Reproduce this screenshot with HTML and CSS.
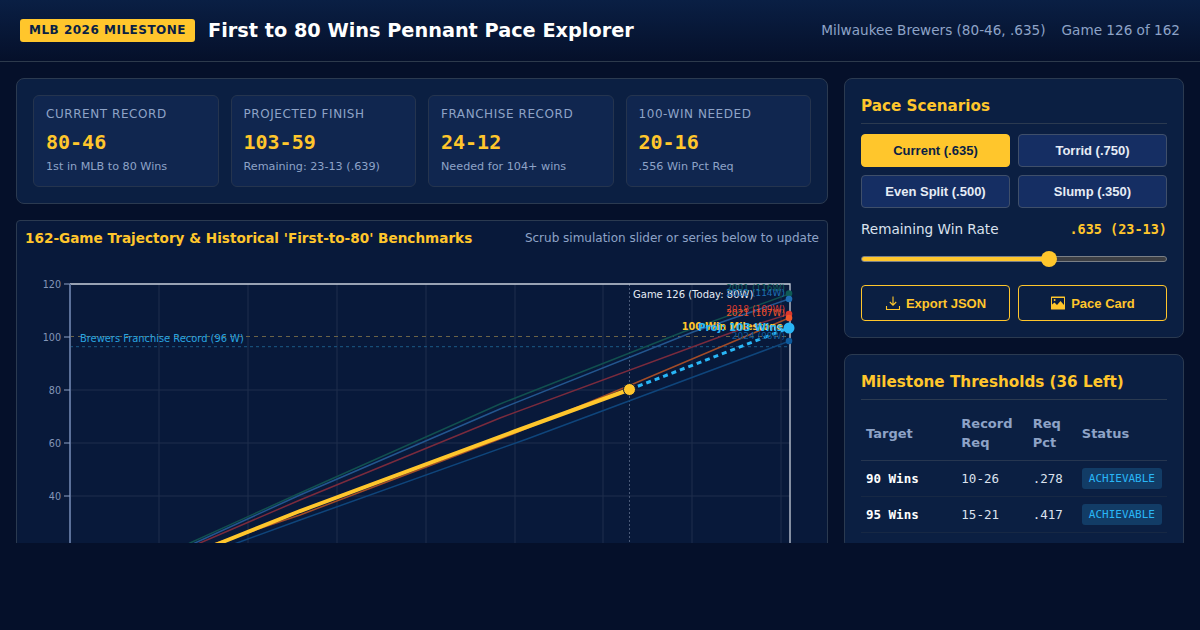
FILE: index.html
```html
<!DOCTYPE html>
<html lang="en">
<head>
    <meta charset="UTF-8">
    <title>First to 80 Wins Pennant Pace Explorer</title>
    <link rel="stylesheet" href="styles.css">
</head>
<body>

    <header class="top-bar">
        <div class="brand">
            <span class="badge">MLB 2026 MILESTONE</span>
            <h1>First to 80 Wins Pennant Pace Explorer</h1>
        </div>
        <div class="team-info">
            <span>Milwaukee Brewers (80-46, .635)</span>
            <span>Game 126 of 162</span>
        </div>
    </header>

    <main class="dashboard">
        <div class="left-col">
            <section class="panel stats-panel">
                <div class="stat-card">
                    <div class="stat-label">Current Record</div>
                    <div class="stat-value">80-46</div>
                    <div class="stat-sub">1st in MLB to 80 Wins</div>
                </div>
                <div class="stat-card">
                    <div class="stat-label">Projected Finish</div>
                    <div class="stat-value">103-59</div>
                    <div class="stat-sub">Remaining: 23-13 (.639)</div>
                </div>
                <div class="stat-card">
                    <div class="stat-label">Franchise Record</div>
                    <div class="stat-value">24-12</div>
                    <div class="stat-sub">Needed for 104+ wins</div>
                </div>
                <div class="stat-card">
                    <div class="stat-label">100-Win Needed</div>
                    <div class="stat-value">20-16</div>
                    <div class="stat-sub">.556 Win Pct Req</div>
                </div>
            </section>

            <section class="panel chart-panel">
                <div class="chart-head">
                    <h2>162-Game Trajectory &amp; Historical 'First-to-80' Benchmarks</h2>
                    <span class="chart-hint">Scrub simulation slider or series below to update</span>
                </div>
                <svg class="chart" viewBox="25 250 794 360" width="794" height="360">
                    <!-- grid -->
                    <g class="grid">
                        <path d="M159 284V610M248 284V610M337 284V610M426 284V610M515 284V610M603 284V610M692 284V610M781 284V610"/>
                        <path d="M70 390H790M70 443H790M70 496H790M70 549H790"/>
                    </g>
                    <path class="ref-hundred" d="M70 336.5H790"/>
                    <path class="ref-franchise" d="M70 346.7H790"/>
                    <path class="today-line" d="M629.5 284V610"/>

                    <!-- axes -->
                    <path class="axis-top" d="M70 284H790V610"/>
                    <path class="axis-left" d="M70 284V610"/>
                    <path class="tick" d="M64 284H70M64 337H70M64 390H70M64 443H70M64 496H70"/>
                    <g class="tick-label">
                        <text x="61" y="287.5">120</text>
                        <text x="61" y="340.5">100</text>
                        <text x="61" y="393.5">80</text>
                        <text x="61" y="446.5">60</text>
                        <text x="61" y="499.5">40</text>
                    </g>

                    <!-- past seasons -->
                    <polyline class="season s-2001" points="70,602 190,543 300,493 500,404 683,332 789,294"/>
                    <polyline class="season s-2022" points="70,602 195,543 300,495 500,409 693,332 789,299"/>
                    <polyline class="season s-2018" points="70,602 200,543 300,500 500,418 733,332 789,314"/>
                    <polyline class="season s-2021" points="70,602 217,543 300,515 513,434 633,384 789,318"/>
                    <polyline class="season s-2024" points="70,602 237,543 300,520 527,439 787,342"/>
                    <circle class="dot-2001" cx="789" cy="293.5" r="3.3"/>
                    <circle class="dot-2022" cx="789" cy="299" r="3.3"/>
                    <circle class="dot-2018" cx="789" cy="314" r="3.3"/>
                    <circle class="dot-2021" cx="789" cy="318" r="3.3"/>
                    <circle class="dot-2024" cx="789" cy="341" r="3.3"/>

                    <!-- brewers -->
                    <polyline class="current-line" points="70,602 220,543 300,511 513,432 629.5,389.5"/>
                    <path class="proj-line" d="M629.5 389.5L789 328"/>
                    <circle class="dot-today" cx="629.5" cy="389.5" r="6"/>
                    <circle class="dot-proj" cx="789" cy="328" r="5.5"/>

                    <!-- labels -->
                    <text class="lbl-franchise" x="80" y="342">Brewers Franchise Record (96 W)</text>
                    <text class="lbl-today" x="633" y="298">Game 126 (Today: 80W)</text>
                    <g class="lbl-season">
                        <text class="l-2001" x="785" y="291">2001 (116W)</text>
                        <text class="l-2022" x="785" y="296">2022 (114W)</text>
                        <text class="l-2018" x="785" y="312">2018 (109W)</text>
                        <text class="l-2021" x="785" y="316">2021 (107W)</text>
                        <text class="l-2024" x="785" y="339">2024 (98W)</text>
                    </g>
                    <text class="lbl-hundred" x="783" y="330">100 Win Milestone</text>
                    <text class="lbl-proj" x="783" y="331">Proj: 103 Wins</text>
                </svg>
            </section>
        </div>

        <div class="right-col">
            <section class="panel side-panel">
                <h3>Pace Scenarios</h3>
                <div class="btn-grid">
                    <button class="pace-btn active">Current (.635)</button>
                    <button class="pace-btn">Torrid (.750)</button>
                    <button class="pace-btn">Even Split (.500)</button>
                    <button class="pace-btn">Slump (.350)</button>
                </div>
                <div class="rate-row">
                    <span class="rate-label">Remaining Win Rate</span>
                    <span class="rate-value">.635 (23-13)</span>
                </div>
                <input class="rate-slider" type="range" min="0" max="1000" value="620">
                <div class="btn-grid export-grid">
                    <button class="export-btn">
                        <svg viewBox="0 0 16 16" width="16" height="16">
                            <path class="icon-stroke" d="M8 1.5V10M4.8 7L8 10.2L11.2 7M1.5 11V14.5H14.5V11"/>
                        </svg>
                        Export JSON
                    </button>
                    <button class="export-btn">
                        <svg viewBox="0 0 16 16" width="16" height="16">
                            <path class="icon-fill" fill-rule="evenodd" d="M1.5 1.5H14.5Q15 1.5 15 2V14Q15 14.5 14.5 14.5H1.5Q1 14.5 1 14V2Q1 1.5 1.5 1.5ZM2 3V9.5L4.5 7.5L7 10L10.5 6L14 10V3Z"/>
                            <circle class="icon-fill" cx="4.6" cy="5" r="1"/>
                        </svg>
                        Pace Card
                    </button>
                </div>
            </section>

            <section class="panel side-panel">
                <h3>Milestone Thresholds (36 Left)</h3>
                <table class="milestones">
                    <thead>
                        <tr>
                            <th class="col-target">Target</th>
                            <th class="col-record">Record Req</th>
                            <th class="col-pct">Req Pct</th>
                            <th>Status</th>
                        </tr>
                    </thead>
                    <tbody>
                        <tr><td class="target">90 Wins</td><td>10-26</td><td>.278</td><td><span class="status">ACHIEVABLE</span></td></tr>
                        <tr><td class="target">95 Wins</td><td>15-21</td><td>.417</td><td><span class="status">ACHIEVABLE</span></td></tr>
                    </tbody>
                </table>
            </section>
        </div>
    </main>

</body>
</html>
```

FILE: styles.css
```css
* {
    box-sizing: border-box;
}
body {
    margin: 0;
    height: 630px;
    overflow: hidden;
    background-color: #05102a;
    color: #e6ecf5;
    font-family: "DejaVu Sans", sans-serif;
}

/* header */
.top-bar {
    display: flex;
    justify-content: space-between;
    align-items: center;
    height: 62px;
    padding: 0 20px;
    background: linear-gradient(180deg, #0a1f44 0%, #05102a 100%);
    border-bottom: 1px solid #2d3a4c;
}
.brand {
    display: flex;
    align-items: center;
    gap: 13px;
}
.badge {
    padding: 4px 9px;
    border-radius: 3px;
    background-color: #ffc62c;
    color: #0a1f44;
    font-size: 12px;
    font-weight: bold;
    letter-spacing: 0.5px;
    line-height: 15px;
}
h1 {
    margin: 0;
    color: #fff;
    font-size: 19.3px;
    font-weight: bold;
}
.team-info {
    display: flex;
    gap: 16px;
    padding-bottom: 2px;
    color: #8ea3c7;
    font-size: 13.6px;
}

/* layout */
.dashboard {
    display: grid;
    grid-template-columns: 812px 340px;
    gap: 16px;
    height: 481px;
    padding: 16px;
    overflow: hidden;
}
.left-col, .right-col {
    display: flex;
    flex-direction: column;
    gap: 16px;
}
.panel {
    background-color: #0b1f42;
    border: 1px solid #2b3a50;
    border-radius: 8px;
}

/* stat cards */
.stats-panel {
    display: grid;
    grid-template-columns: repeat(4, 1fr);
    gap: 12px;
    padding: 16px;
}
.stat-card {
    height: 92px;
    padding: 11px 12px;
    background-color: #10264f;
    border: 1px solid #25344e;
    border-radius: 6px;
}
.stat-label {
    color: #8ea3c7;
    font-size: 12px;
    letter-spacing: 0.56px;
    line-height: 15px;
    text-transform: uppercase;
}
.stat-value {
    margin-top: 7px;
    color: #ffc62c;
    font-family: "DejaVu Sans Mono", monospace;
    font-size: 20px;
    font-weight: bold;
    line-height: 26px;
}
.stat-sub {
    margin-top: 5px;
    color: #8ea3c7;
    font-size: 11.2px;
    line-height: 14px;
}

/* chart */
.chart-panel {
    flex: none;
    height: 400px;
    padding: 7px 8px;
    background-color: #08193a;
    border-radius: 4px 4px 0 0;
}
.chart-head {
    display: flex;
    justify-content: space-between;
    align-items: center;
    height: 19px;
}
.chart-head h2 {
    margin: 0;
    color: #ffc62c;
    font-size: 13.6px;
    font-weight: bold;
}
.chart-hint {
    color: #8ea3c7;
    font-size: 12px;
}
.chart {
    display: block;
    margin-top: 3px;
}
.chart text {
    font-family: "DejaVu Sans", sans-serif;
}
.grid path {
    fill: none;
    stroke: #1f2e4d;
    stroke-width: 1;
}
.ref-hundred {
    stroke: #6b6347;
    stroke-dasharray: 4 4;
}
.ref-franchise {
    stroke: #1b5a85;
    stroke-dasharray: 3 3;
}
.today-line {
    stroke: #4a5a78;
    stroke-dasharray: 2 2;
}
.axis-top {
    fill: none;
    stroke: #c8cfdb;
    stroke-width: 1.3;
}
.axis-left {
    stroke: #5b7099;
    stroke-width: 2;
}
.tick {
    stroke: #8ea3c7;
    stroke-width: 1;
}
.tick-label text {
    fill: #8496b8;
    font-size: 9.6px;
    text-anchor: end;
}
.season {
    fill: none;
    stroke-width: 1.5;
}
.s-2001 { stroke: #11504f; }
.s-2022 { stroke: #23568f; }
.s-2018 { stroke: #7a2b3d; }
.s-2021 { stroke: #a24c28; }
.s-2024 { stroke: #0f457b; }
.dot-2001 { fill: #0f5b55; }
.dot-2022 { fill: #1f6fb5; }
.dot-2018 { fill: #d9382e; }
.dot-2021 { fill: #f0562a; }
.dot-2024 { fill: #0d5a9c; }
.current-line {
    fill: none;
    stroke: #ffc62c;
    stroke-width: 4;
}
.proj-line {
    stroke: #29b6f6;
    stroke-width: 3;
    stroke-dasharray: 5 4;
}
.dot-today {
    fill: #ffc62c;
    stroke: #08193a;
    stroke-width: 1;
}
.dot-proj { fill: #29b6f6; }
.lbl-franchise {
    fill: #29a5e0;
    font-size: 9.9px;
}
.lbl-today {
    fill: #e6ecf5;
    font-size: 10px;
}
.lbl-season text {
    font-size: 9px;
    text-anchor: end;
}
.l-2001 { fill: #11605a; }
.l-2022 { fill: #1f6fb5; }
.l-2018 { fill: #d9382e; }
.l-2021 { fill: #f0562a; }
.l-2024 { fill: #0d5a9c; }
.lbl-hundred {
    fill: #ffc62c;
    font-size: 9.7px;
    font-weight: bold;
    text-anchor: end;
}
.lbl-proj {
    fill: #29b6f6;
    font-size: 10.4px;
    font-weight: bold;
    text-anchor: end;
}

/* side panels */
.side-panel {
    padding: 16px;
}
.side-panel h3 {
    margin: 0 0 10px;
    padding: 1px 0 7px;
    border-bottom: 1px solid #2b3a50;
    color: #ffc62c;
    font-size: 15.2px;
    font-weight: bold;
    line-height: 20px;
}
.btn-grid {
    display: grid;
    grid-template-columns: 1fr 1fr;
    gap: 8px;
}
.pace-btn, .export-btn {
    border-radius: 4px;
    font-family: "Liberation Sans", Arial, sans-serif;
    font-size: 13px;
    font-weight: bold;
}
.pace-btn {
    height: 33px;
    background-color: #152e63;
    border: 1px solid #3f4f6a;
    color: #e6ecf5;
}
.pace-btn.active {
    background-color: #ffc62c;
    border-color: #ffc62c;
    color: #0a1f44;
}
.rate-row {
    display: flex;
    justify-content: space-between;
    align-items: center;
    margin-top: 13px;
}
.rate-label {
    color: #dbe2ee;
    font-size: 13.6px;
}
.rate-value {
    color: #ffc62c;
    font-family: "DejaVu Sans Mono", monospace;
    font-size: 13.5px;
    font-weight: bold;
}
.rate-slider {
    display: block;
    appearance: none;
    width: 100%;
    height: 6px;
    margin: 19px 0 0;
    border: 1px solid #7a7f86;
    border-radius: 3px;
    background: linear-gradient(90deg, #ffc62c 0 61.5%, #3d3f44 61.5%);
}
.rate-slider::-webkit-slider-thumb {
    appearance: none;
    width: 16px;
    height: 16px;
    border-radius: 50%;
    background-color: #ffc62c;
}
.export-grid {
    margin-top: 23px;
}
.export-btn {
    display: flex;
    justify-content: center;
    align-items: center;
    gap: 5px;
    height: 36px;
    padding: 0;
    background: transparent;
    border: 1px solid #ffc62c;
    color: #ffc62c;
}
.icon-stroke {
    fill: none;
    stroke: #ffc62c;
    stroke-width: 1.1;
}
.icon-fill {
    fill: #ffc62c;
}

/* table */
.milestones {
    width: 100%;
    border-collapse: collapse;
    margin-top: -4px;
}
.milestones th {
    padding: 8px 5px;
    border-bottom: 1px solid #263650;
    color: #8ea3c7;
    font-size: 13px;
    font-weight: bold;
    line-height: 19px;
    text-align: left;
}
.col-target { width: 95.5px; }
.col-record { width: 71.5px; }
.col-pct { width: 49px; }
.milestones td {
    height: 36px;
    padding: 0 5px;
    border-bottom: 1px solid #172844;
    color: #dbe2ee;
    font-family: "DejaVu Sans Mono", monospace;
    font-size: 12.5px;
}
.milestones .target {
    color: #fff;
    font-weight: bold;
}
.status {
    display: inline-block;
    padding: 3px 7px;
    border-radius: 3px;
    background-color: #123c66;
    color: #29b6f6;
    font-size: 11px;
    line-height: 15px;
}
```
